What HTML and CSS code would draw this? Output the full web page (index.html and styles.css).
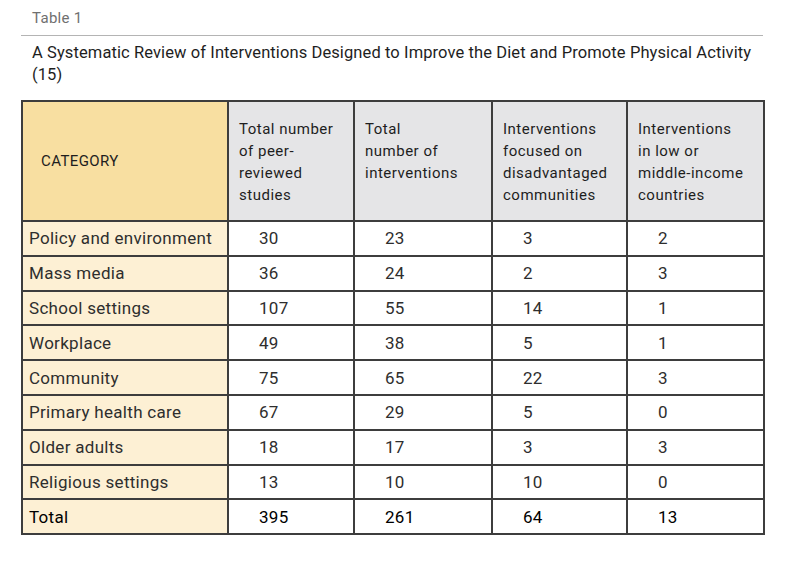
FILE: index.html
```html
<!DOCTYPE html>
<html>
<head>
<meta charset="utf-8">
<link rel="stylesheet" href="styles.css">
</head>
<body>
<div class="page">
  <div class="label">Table 1</div>
  <div class="title">A Systematic Review of Interventions Designed to Improve the Diet and Promote Physical Activity<br>(15)</div>
  <table class="data">
    <colgroup>
      <col class="c1"><col class="c2"><col class="c3"><col class="c4"><col class="c5">
    </colgroup>
    <thead>
      <tr class="head">
        <th class="cat">CATEGORY</th>
        <th>Total number<br>of peer-<br>reviewed<br>studies</th>
        <th>Total<br>number of<br>interventions</th>
        <th>Interventions<br>focused on<br>disadvantaged<br>communities</th>
        <th>Interventions<br>in low or<br>middle-income<br>countries</th>
      </tr>
    </thead>
    <tbody>
      <tr><td class="name">Policy and environment</td><td>30</td><td>23</td><td>3</td><td>2</td></tr>
      <tr><td class="name">Mass media</td><td>36</td><td>24</td><td>2</td><td>3</td></tr>
      <tr><td class="name">School settings</td><td>107</td><td>55</td><td>14</td><td>1</td></tr>
      <tr><td class="name">Workplace</td><td>49</td><td>38</td><td>5</td><td>1</td></tr>
      <tr><td class="name">Community</td><td>75</td><td>65</td><td>22</td><td>3</td></tr>
      <tr><td class="name">Primary health care</td><td>67</td><td>29</td><td>5</td><td>0</td></tr>
      <tr><td class="name">Older adults</td><td>18</td><td>17</td><td>3</td><td>3</td></tr>
      <tr><td class="name">Religious settings</td><td>13</td><td>10</td><td>10</td><td>0</td></tr>
      <tr class="total"><td class="name">Total</td><td>395</td><td>261</td><td>64</td><td>13</td></tr>
    </tbody>
  </table>
</div>
</body>
</html>
```
FILE: styles.css
```css
html, body {
  margin: 0;
  padding: 0;
  background: #fff;
}
body {
  font-family: Roboto, "Liberation Sans", sans-serif;
  color: #2a2a2a;
}
.page {
  padding: 9px 0 0 21px;
  width: 742px;
}
.label {
  padding-left: 11px;
  font-size: 15px;
  line-height: 18px;
  letter-spacing: 0.3px;
  color: #707070;
  padding-bottom: 8px;
  border-bottom: 1px solid #b4b4b4;
}
.title {
  padding: 6px 0 0 11px;
  font-size: 16.5px;
  line-height: 22px;
  letter-spacing: 0.1px;
  color: #1e1e1e;
  margin-bottom: 14px;
}
.data {
  border-collapse: collapse;
  table-layout: fixed;
  width: 742px;
  border: 2px solid #3d3d3d;
  font-size: 17px;
  letter-spacing: 0.3px;
}
.c1 { width: 206px; }
.c2 { width: 126px; }
.c3 { width: 138px; }
.c4 { width: 135px; }
.c5 { width: 137px; }
.data th, .data td {
  border: 2px solid #3d3d3d;
  text-align: left;
}
.head th {
  background: #e5e5e7;
  font-weight: normal;
  vertical-align: top;
  height: 102px;
  padding: 16px 4px 0 10px;
  font-size: 15px;
  letter-spacing: 0.5px;
  line-height: 22px;
  color: #1e1e1e;
}
.head th.cat {
  background: #f8dfa1;
  vertical-align: middle;
  padding: 0 0 0 18px;
  letter-spacing: 0.4px;
}
.data td {
  height: 32.8px;
  padding: 0 0 0 30px;
  color: #2e2e2e;
}
.data td.name {
  background: #fdf0d4;
  padding-left: 6px;
}
.total td {
  color: #000;
}
```
